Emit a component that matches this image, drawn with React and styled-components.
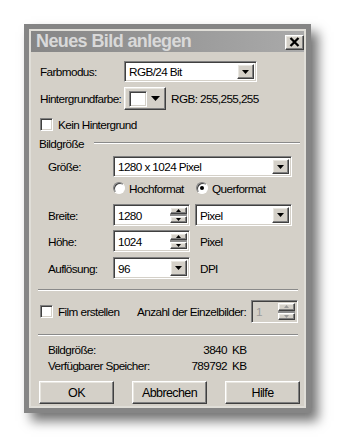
import React from 'react';
import styled, { createGlobalStyle, css } from 'styled-components';

const FONT = `"Liberation Sans", Arial, sans-serif`;

const Global = createGlobalStyle`
  html, body { margin: 0; padding: 0; background: #ffffff; }
  body { font-family: ${FONT}; }
  * { box-sizing: border-box; }
`;

const raised = css`
  border: 1px solid;
  border-color: #ffffff #404040 #404040 #ffffff;
  box-shadow: inset -1px -1px #808080, inset 1px 1px #e8e6e0;
  background: #d4d0c8;
`;

const sunken = css`
  border: 1px solid;
  border-color: #808080 #ffffff #ffffff #808080;
  box-shadow: inset 1px 1px #404040, inset -1px -1px #d4d0c8;
`;

const Stage = styled.div`
  width: 338px;
  height: 440px;
  padding: 24px 0 0 24px;
`;

const Window = styled.div`
  width: 287px;
  border: 5px solid #858585;
  padding: 2px;
  background: #e0ded8;
  box-shadow: 7px 8px 11px rgba(0, 0, 0, 0.55);
  font: 11.75px ${FONT};
  letter-spacing: -0.6px;
  color: #000;
`;

const TitleBar = styled.div`
  height: 21px;
  display: flex;
  align-items: center;
  justify-content: space-between;
  padding: 0 0 0 5px;
  background: linear-gradient(to right, #868686, #aaaaaa);
`;

const Title = styled.span`
  font: bold 18px/21px ${FONT};
  letter-spacing: -0.6px;
  color: #d9d9d9;
  white-space: nowrap;
`;

const CloseButton = styled.div`
  ${raised};
  width: 19px;
  height: 15px;
  margin-top: 1px;
  display: flex;
  align-items: center;
  justify-content: center;
`;

const Body = styled.div`
  background: #d4d0c8;
  display: flex;
  flex-direction: column;
  padding: 0 4px 2px 9px;
`;

const Row = styled.div`
  display: flex;
  align-items: center;
  height: ${(p) => p.$h}px;
  margin-top: ${(p) => p.$mt}px;
  padding-left: ${(p) => p.$indent || 0}px;
  white-space: nowrap;
`;

const Label = styled.span`
  width: ${(p) => p.$w}px;
  flex: none;
`;

const Text = styled.span`
  margin-left: ${(p) => p.$ml || 0}px;
  color: ${(p) => (p.$disabled ? '#9a9a9a' : '#000')};
`;

const Combo = styled.div`
  ${sunken};
  background: #fff;
  width: ${(p) => p.$w}px;
  height: ${(p) => p.$h || 21}px;
  display: flex;
  align-items: stretch;
  padding: 2px;
  flex: none;
`;

const ComboText = styled.span`
  flex: 1;
  padding-left: 2px;
  display: flex;
  align-items: center;
`;

const DropButton = styled.div`
  ${raised};
  width: 17px;
  display: flex;
  align-items: center;
  justify-content: center;
`;

const Arrow = ({ up, w = 7, h = 4, color = '#000' }) => (
  <svg width={w} height={h} viewBox={`0 0 ${w} ${h}`}>
    <polygon points={up ? `0,${h} ${w / 2},0 ${w},${h}` : `0,0 ${w},0 ${w / 2},${h}`} fill={color} />
  </svg>
);

const ColorButton = styled.div`
  ${raised};
  width: 42px;
  height: 23px;
  display: flex;
  align-items: center;
  padding-left: 4px;
  flex: none;
`;

const Swatch = styled.div`
  ${sunken};
  width: 18px;
  height: 16px;
  background: #fff;
`;

const ColorArrow = styled.div`
  flex: 1;
  display: flex;
  justify-content: center;
  padding-right: 2px;
`;

const Check = styled.div`
  ${sunken};
  width: 13px;
  height: 13px;
  background: #fff;
  flex: none;
`;

const Option = styled.div`
  display: flex;
  align-items: center;
  width: ${(p) => (p.$w ? `${p.$w}px` : 'auto')};
  flex: none;
`;

const Radio = styled.div`
  width: 12px;
  height: 12px;
  border-radius: 50%;
  background: #fff;
  border: 1px solid;
  border-color: #808080 #ffffff #ffffff #808080;
  box-shadow: inset 1px 1px #404040;
  display: flex;
  align-items: center;
  justify-content: center;
  flex: none;
  &::after {
    content: '';
    display: ${(p) => (p.$on ? 'block' : 'none')};
    width: 4px;
    height: 4px;
    border-radius: 50%;
    background: #000;
  }
`;

const GroupHeader = styled.div`
  display: flex;
  align-items: center;
  height: 14px;
  margin-top: 5px;
  margin-left: -1px;
`;

const GroupLine = styled.div`
  flex: 1;
  margin-left: 10px;
  border-top: 1px solid #8a8a8a;
  border-bottom: 1px solid #ffffff;
`;

const Separator = styled.div`
  margin: ${(p) => p.$mt}px 2px 0 -2px;
  border-top: 1px solid #8a8a8a;
  border-bottom: 1px solid #ffffff;
`;

const SpinField = styled.div`
  ${sunken};
  background: ${(p) => (p.$disabled ? '#d4d0c8' : '#fff')};
  width: ${(p) => p.$w}px;
  height: ${(p) => p.$h || 22}px;
  display: flex;
  align-items: stretch;
  padding: 2px;
  flex: none;
`;

const Spin = styled.div`
  width: 17px;
  display: flex;
  flex-direction: column;
  background: #8c8c8c;
  gap: 2px;
`;

const SpinHalf = styled.div`
  ${raised};
  flex: 1;
  display: flex;
  align-items: center;
  justify-content: center;
`;

const Value = styled.span`
  width: ${(p) => p.$w}px;
  text-align: right;
  flex: none;
`;

const Buttons = styled.div`
  display: flex;
  gap: 18px;
  margin: 9px 0 0 -1px;
`;

const Button = styled.div`
  ${raised};
  width: 75px;
  height: 23px;
  display: flex;
  align-items: center;
  justify-content: center;
  font-size: 12.5px;
  letter-spacing: -0.6px;
`;

const Combobox = ({ w, h, children }) => (
  <Combo $w={w} $h={h}>
    <ComboText>{children}</ComboText>
    <DropButton>
      <Arrow />
    </DropButton>
  </Combo>
);

const SpinBox = ({ w, h, disabled, children }) => (
  <SpinField $w={w} $h={h} $disabled={disabled}>
    <ComboText>
      <Text $disabled={disabled}>{children}</Text>
    </ComboText>
    <Spin>
      <SpinHalf>
        <Arrow up w={5} h={3} color={disabled ? '#9a9a9a' : '#000'} />
      </SpinHalf>
      <SpinHalf>
        <Arrow w={5} h={3} color={disabled ? '#9a9a9a' : '#000'} />
      </SpinHalf>
    </Spin>
  </SpinField>
);

export default function App() {
  return (
    <Stage>
      <Global />
      <Window>
        <TitleBar>
          <Title>Neues Bild anlegen</Title>
          <CloseButton>
            <svg width="11" height="10" viewBox="0 0 11 10">
              <path d="M1.5 1 L9.5 9 M9.5 1 L1.5 9" stroke="#000" strokeWidth="2.3" />
            </svg>
          </CloseButton>
        </TitleBar>
        <Body>
          <Row $h={21} $mt={9}>
            <Label $w={84}>Farbmodus:</Label>
            <Combobox w={133}>RGB/24 Bit</Combobox>
          </Row>
          <Row $h={23} $mt={5}>
            <Label $w={84}>Hintergrundfarbe:</Label>
            <ColorButton>
              <Swatch />
              <ColorArrow>
                <Arrow w={9} h={5} />
              </ColorArrow>
            </ColorButton>
            <Text $ml={5}>RGB: 255,255,255</Text>
          </Row>
          <Row $h={14} $mt={7}>
            <Check />
            <Text $ml={5}>Kein Hintergrund</Text>
          </Row>
          <GroupHeader>
            <span>Bildgröße</span>
            <GroupLine />
          </GroupHeader>
          <Row $h={21} $mt={6} $indent={8}>
            <Label $w={65}>Größe:</Label>
            <Combobox w={179}>1280 x 1024 Pixel</Combobox>
          </Row>
          <Row $h={14} $mt={4} $indent={73}>
            <Option $w={83}>
              <Radio />
              <Text $ml={4}>Hochformat</Text>
            </Option>
            <Option>
              <Radio $on />
              <Text $ml={4}>Querformat</Text>
            </Option>
          </Row>
          <Row $h={22} $mt={9} $indent={8}>
            <Label $w={65}>Breite:</Label>
            <SpinBox w={77}>1280</SpinBox>
            <Text $ml={5}>
              <Combobox w={97} h={22}>Pixel</Combobox>
            </Text>
          </Row>
          <Row $h={22} $mt={4} $indent={8}>
            <Label $w={65}>Höhe:</Label>
            <SpinBox w={77}>1024</SpinBox>
            <Text $ml={10}>Pixel</Text>
          </Row>
          <Row $h={22} $mt={5} $indent={8}>
            <Label $w={65}>Auflösung:</Label>
            <Combobox w={77} h={22}>96</Combobox>
            <Text $ml={10}>DPI</Text>
          </Row>
          <Separator $mt={10} />
          <Row $h={23} $mt={9}>
            <Option $w={97}>
              <Check />
              <Text $ml={5}>Film erstellen</Text>
            </Option>
            <Option $w={114}>
              <Text>Anzahl der Einzelbilder:</Text>
            </Option>
            <SpinBox w={47} h={23} disabled>1</SpinBox>
          </Row>
          <Separator $mt={11} />
          <Row $h={14} $mt={6} $indent={8}>
            <Label $w={120}>Bildgröße:</Label>
            <Value $w={59}>3840</Value>
            <Text $ml={5}>KB</Text>
          </Row>
          <Row $h={14} $mt={2} $indent={8}>
            <Label $w={120}>Verfügbarer Speicher:</Label>
            <Value $w={59}>789792</Value>
            <Text $ml={5}>KB</Text>
          </Row>
          <Buttons>
            <Button>OK</Button>
            <Button>Abbrechen</Button>
            <Button>Hilfe</Button>
          </Buttons>
        </Body>
      </Window>
    </Stage>
  );
}
